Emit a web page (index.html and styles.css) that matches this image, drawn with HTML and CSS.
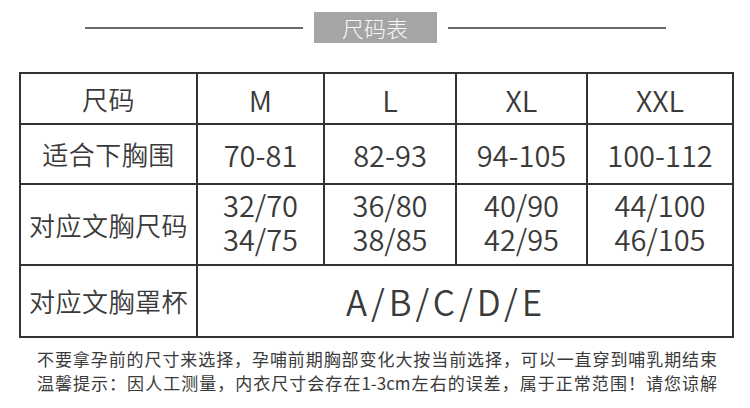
FILE: index.html
```html
<!DOCTYPE html>
<html lang="zh-CN">
<head>
<meta charset="utf-8">
<title>尺码表</title>
<link rel="stylesheet" href="styles.css">
</head>
<body>
<div class="page">
  <div class="title-row">
    <span class="rule"></span>
    <span class="title">尺码表</span>
    <span class="rule"></span>
  </div>
  <table class="size-table">
    <colgroup>
      <col class="c1"><col class="c2"><col class="c3"><col class="c4"><col class="c5">
    </colgroup>
    <tr class="r-head">
      <td class="label">尺码</td>
      <td class="num">M</td>
      <td class="num">L</td>
      <td class="num">XL</td>
      <td class="num">XXL</td>
    </tr>
    <tr class="r-under">
      <td class="label">适合下胸围</td>
      <td class="num">70-81</td>
      <td class="num">82-93</td>
      <td class="num">94-105</td>
      <td class="num">100-112</td>
    </tr>
    <tr class="r-bra">
      <td class="label">对应文胸尺码</td>
      <td class="num two"><span class="ln">32/70</span><span class="ln">34/75</span></td>
      <td class="num two"><span class="ln">36/80</span><span class="ln">38/85</span></td>
      <td class="num two"><span class="ln">40/90</span><span class="ln">42/95</span></td>
      <td class="num two"><span class="ln">44/100</span><span class="ln">46/105</span></td>
    </tr>
    <tr class="r-cup">
      <td class="label">对应文胸罩杯</td>
      <td class="cups" colspan="4">A/B/C/D/E</td>
    </tr>
  </table>
  <div class="notes">
    <div class="note">不要拿孕前的尺寸来选择，孕哺前期胸部变化大按当前选择，可以一直穿到哺乳期结束</div>
    <div class="note">温馨提示：因人工测量，内衣尺寸会存在1-3cm左右的误差，属于正常范围！请您谅解</div>
  </div>
</div>
</body>
</html>
```

FILE: styles.css
```css
html, body {
  margin: 0;
  padding: 0;
  background: #ffffff;
}

body {
  font-family: "Noto Sans CJK SC", "Noto Sans", sans-serif;
  color: #3d3d3d;
}

.page {
  width: 750px;
  height: 408px;
  overflow: hidden;
}

.title-row {
  display: flex;
  align-items: center;
  justify-content: center;
  gap: 11px;
  padding-top: 12px;
  height: 31px;
}

.rule {
  width: 218px;
  height: 2px;
  background: #6a6a6a;
}

.title {
  box-sizing: border-box;
  width: 123px;
  height: 31px;
  background: #a5a5a5;
  color: #f7f7f7;
  font-size: 22px;
  font-weight: 300;
  line-height: 31px;
  text-align: center;
}

.size-table {
  margin: 29px 0 0 19px;
  width: 713px;
  table-layout: fixed;
  border-collapse: collapse;
}

.c1 { width: 177px; }
.c2 { width: 127px; }
.c3 { width: 132px; }
.c4 { width: 131px; }
.c5 { width: 146px; }

.size-table td {
  border: 2px solid #333333;
  padding: 0;
  text-align: center;
  vertical-align: middle;
  color: #3a3a3a;
  font-weight: 350;
}

.r-head { height: 51px; }
.r-under { height: 60px; }
.r-bra { height: 81px; }
.r-cup { height: 72px; }

.label {
  font-size: 26px;
  letter-spacing: 0.5px;
  line-height: 34px;
}

.num {
  font-size: 29px;
  line-height: 34px;
}

.two {
  padding-bottom: 8px !important;
}

.ln {
  display: block;
  height: 34px;
  line-height: 34px;
}

.cups {
  font-size: 35px;
  letter-spacing: 4px;
  padding-right: 38px !important;
  line-height: 40px;
}

.notes {
  width: 680px;
  margin: 9px 0 0 37px;
}

.note {
  font-size: 17px;
  line-height: 24px;
  color: #3a3a3a;
  text-align: justify;
  text-align-last: justify;
  white-space: nowrap;
}
```
